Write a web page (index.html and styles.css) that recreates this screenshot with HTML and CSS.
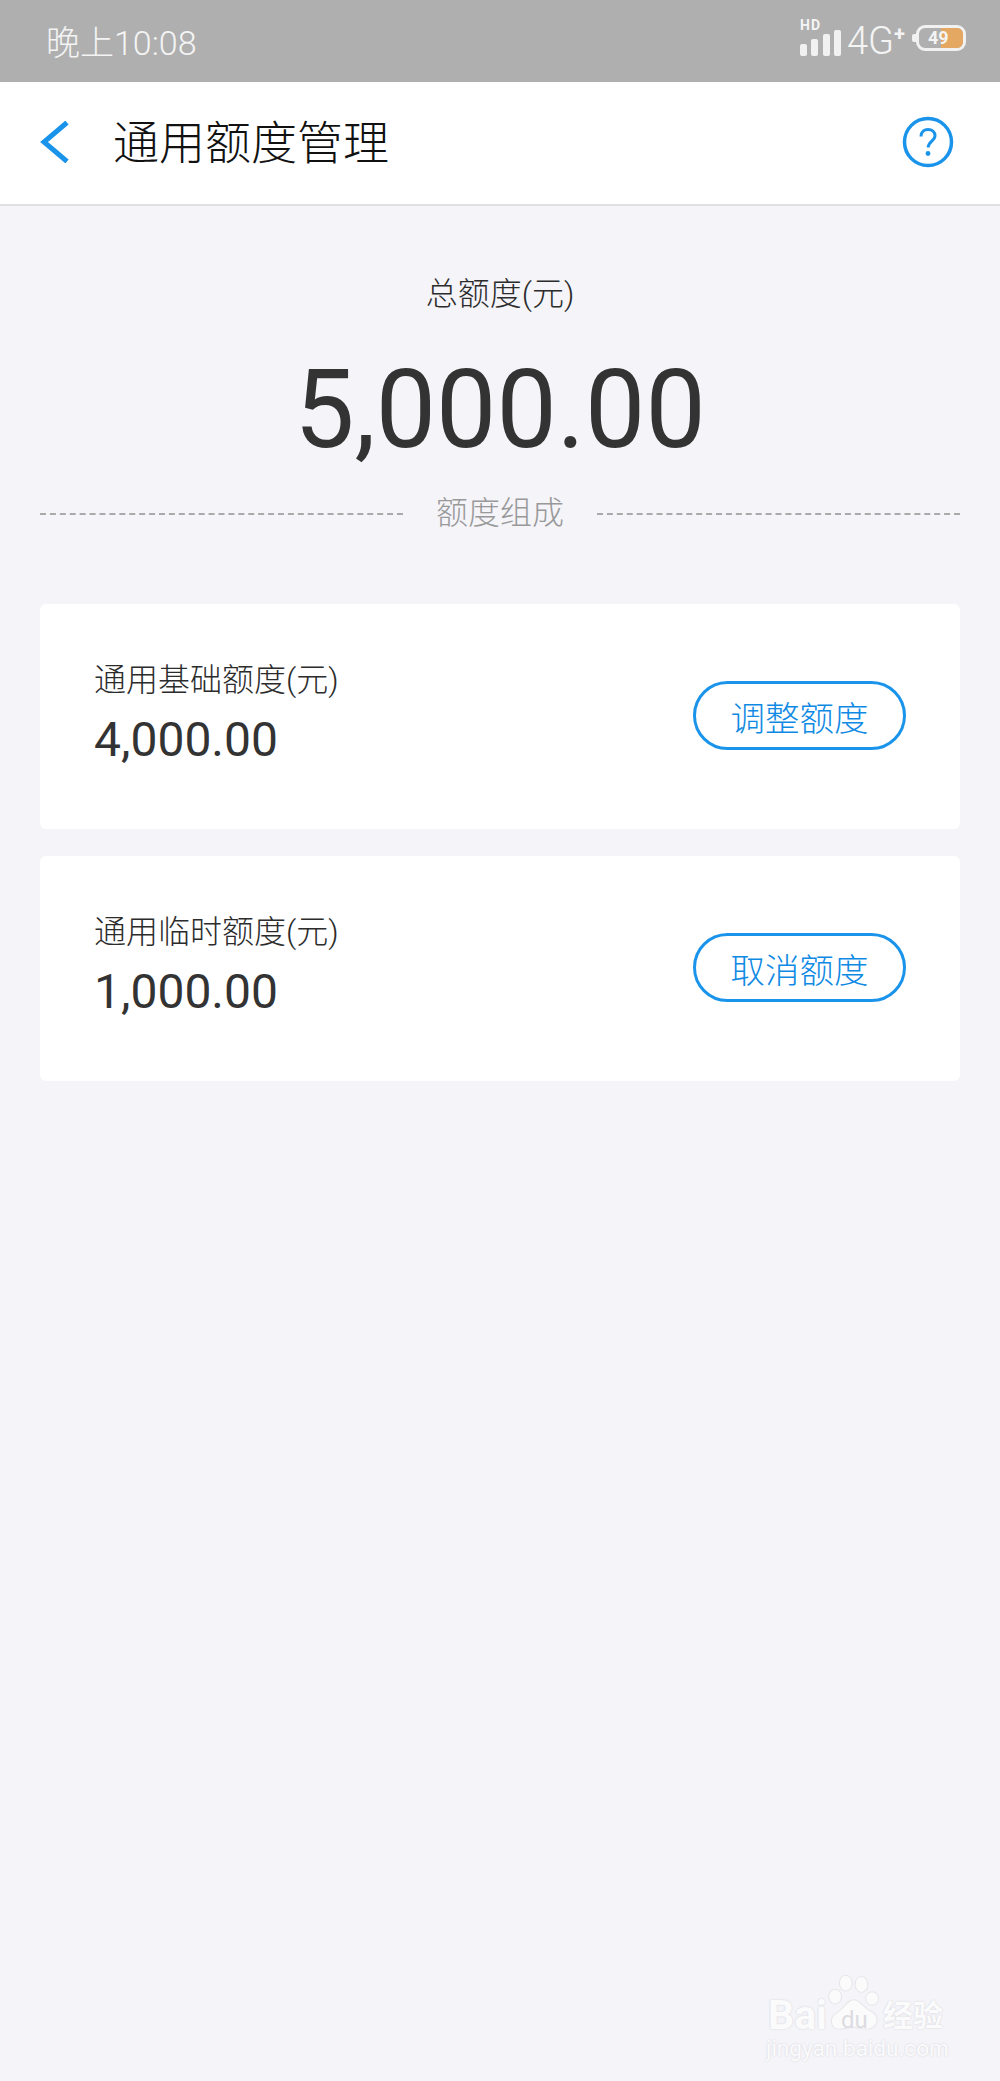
FILE: index.html
```html
<!DOCTYPE html>
<html lang="zh-CN">
<head>
    <meta charset="UTF-8">
    <meta name="viewport" content="width=device-width, initial-scale=1.0">
    <title>通用额度管理</title>
    <link rel="stylesheet" href="styles.css">
</head>
<body>
    <div class="status-bar">
        <span class="time">晚上10:08</span>
        <div class="status-icons">
            <div class="signal">
                <span class="hd">HD</span>
                <svg width="42" height="26" viewBox="0 0 42 26">
                    <rect x="0" y="14" width="7" height="12" rx="2" fill="#f1f1f1"/>
                    <rect x="11" y="9" width="7" height="17" rx="2" fill="#f1f1f1"/>
                    <rect x="23" y="4" width="7" height="22" rx="2" fill="#f1f1f1"/>
                    <rect x="34" y="0" width="7" height="26" rx="2" fill="#f1f1f1"/>
                </svg>
            </div>
            <span class="network">4G</span>
            <span class="plus">+</span>
            <div class="battery-cap"></div>
            <div class="battery">
                <span class="battery-level"></span>
                <span class="battery-num">49</span>
            </div>
        </div>
    </div>

    <div class="header">
        <svg class="back" width="30" height="42" viewBox="0 0 30 42">
            <path d="M27 1.500 L4 21 L27 40.500" fill="none" stroke="#1a94ea" stroke-width="5"/>
        </svg>
        <h1>通用额度管理</h1>
        <svg class="help" width="52" height="52" viewBox="0 0 52 52">
            <circle cx="26" cy="26" r="23.500" fill="none" stroke="#1a94ea" stroke-width="3.500"/>
            <path d="M19 20.500 C19 15.500 22.500 13.500 26 13.500 C30 13.500 33 16 33 19.800 C33 25 26.200 25.500 26.200 31.500" fill="none" stroke="#1a94ea" stroke-width="3"/>
            <circle cx="26" cy="37.500" r="2.400" fill="#1a94ea"/>
        </svg>
    </div>

    <div class="summary">
        <p class="summary-label">总额度(元)</p>
        <p class="summary-amount">5,000.00</p>
        <div class="divider">
            <span class="dash"></span>
            <span class="divider-text">额度组成</span>
            <span class="dash"></span>
        </div>
    </div>

    <div class="cards">
        <div class="card">
            <div class="card-text">
                <p class="card-label">通用基础额度(元)</p>
                <p class="card-amount">4,000.00</p>
            </div>
            <button type="button" class="pill">调整额度</button>
        </div>
        <div class="card">
            <div class="card-text">
                <p class="card-label">通用临时额度(元)</p>
                <p class="card-amount">1,000.00</p>
            </div>
            <button type="button" class="pill">取消额度</button>
        </div>
    </div>

    <div class="watermark">
        <div class="wm-top">
            <span class="wm-bai">Bai</span>
            <svg class="wm-paw" width="54" height="60" viewBox="0 0 76 98" preserveAspectRatio="none">
                <ellipse cx="10" cy="37" rx="9" ry="12" fill="#fbfbfc" stroke="#e6e6eb" stroke-width="1.500"/>
                <ellipse cx="25" cy="15" rx="9" ry="13" fill="#fbfbfc" stroke="#e6e6eb" stroke-width="1.500"/>
                <ellipse cx="47" cy="17" rx="9" ry="13" fill="#fbfbfc" stroke="#e6e6eb" stroke-width="1.500"/>
                <ellipse cx="62" cy="40" rx="9" ry="11" fill="#fbfbfc" stroke="#e6e6eb" stroke-width="1.500"/>
                <path d="M36 42 C46 42 50 56 62 62 C74 70 70 90 54 90 C46 90 42 87 36 87 C30 87 26 90 16 90 C4 90 0 72 12 64 C24 56 26 42 36 42 Z" fill="#fbfbfc" stroke="#e6e6eb" stroke-width="1.500"/>
            </svg>
            <span class="wm-du">du</span>
            <span class="wm-jy">经验</span>
        </div>
        <div class="wm-url">jingyan.baidu.com</div>
    </div>
</body>
</html>
```

FILE: styles.css
```css
* {
    margin: 0;
    padding: 0;
    box-sizing: border-box;
}

body {
    position: relative;
    height: 2081px;
    overflow: hidden;
    background-color: #f4f4f9;
    font-family: Roboto, "Noto Sans CJK SC", sans-serif;
}

.status-bar {
    display: flex;
    justify-content: space-between;
    align-items: center;
    height: 82px;
    padding: 0 34px 2px 46px;
    background-color: #afafaf;
    color: #f4f4f4;
}

.time {
    font-size: 34px;
    font-weight: 300;
}

.status-icons {
    display: flex;
    align-items: center;
    height: 82px;
}

.signal {
    position: relative;
    width: 42px;
    height: 30px;
    margin-top: 3px;
    margin-right: 5px;
    padding-top: 3px;
}

.hd {
    position: absolute;
    left: 0;
    top: -9px;
    font-size: 14px;
    font-weight: 700;
    letter-spacing: 1px;
    line-height: 14px;
}

.network {
    font-size: 38px;
    font-weight: 300;
    line-height: 40px;
    margin-top: 2px;
}

.plus {
    font-size: 20px;
    font-weight: 700;
    line-height: 20px;
    margin-top: -12px;
    margin-right: 7px;
}

.battery-cap {
    width: 4px;
    height: 8px;
    margin-top: -4px;
    background-color: #f1f1f1;
    border-radius: 2px 0 0 2px;
}

.battery {
    position: relative;
    width: 50px;
    height: 26px;
    margin-top: -4px;
    border: 3px solid #f1f1f1;
    border-radius: 9px;
    overflow: hidden;
}

.battery-level {
    position: absolute;
    right: 0;
    top: 0;
    bottom: 0;
    width: 22px;
    background-color: #e5a862;
}

.battery-num {
    position: absolute;
    left: 9px;
    top: 0;
    font-size: 18px;
    font-weight: 700;
    line-height: 20px;
}

.header {
    display: flex;
    align-items: center;
    height: 124px;
    padding: 0 46px 2px 40px;
    background-color: #ffffff;
    border-bottom: 2px solid #dfdfe4;
}

.header h1 {
    flex: 1;
    margin-left: 43px;
    padding-bottom: 6px;
    font-size: 46px;
    font-weight: 300;
    color: #111111;
}

.summary {
    padding: 66px 40px 0;
    text-align: center;
}

.summary-label {
    font-size: 32px;
    font-weight: 300;
    line-height: 44px;
    color: #2c2c2c;
}

.summary-amount {
    margin-top: 24px;
    font-size: 110px;
    line-height: 140px;
    color: #333333;
    transform: scaleX(0.976);
}

.divider {
    display: flex;
    align-items: center;
    height: 50px;
    margin-top: 9px;
}

.dash {
    flex: 1;
    border-top: 2px dashed #aaaaaa;
}

.divider-text {
    width: 194px;
    padding-bottom: 8px;
    font-size: 32px;
    font-weight: 300;
    color: #999999;
}

.cards {
    display: flex;
    flex-direction: column;
    gap: 27px;
    padding: 65px 40px 0;
}

.card {
    display: flex;
    justify-content: space-between;
    align-items: center;
    height: 225px;
    padding: 0 54px;
    background-color: #ffffff;
    border-radius: 6px;
}

.card-text {
    padding-bottom: 6px;
}

.card-label {
    font-size: 32px;
    font-weight: 300;
    line-height: 46px;
    color: #2c2c2c;
}

.card-amount {
    margin-top: 6px;
    font-size: 48px;
    line-height: 62px;
    color: #333333;
}

.pill {
    width: 213px;
    height: 69px;
    margin-bottom: 2px;
    background-color: #ffffff;
    border: 3px solid #1a94ea;
    border-radius: 35px;
    font-family: inherit;
    font-size: 34.500px;
    font-weight: 300;
    color: #0f8ae4;
}

.watermark {
    position: absolute;
    left: 766px;
    top: 1974px;
    width: 190px;
    color: #fbfbfc;
    text-shadow: 0 0 2px #cfcfd6;
}

.wm-top {
    position: relative;
    height: 59px;
}

.wm-bai {
    position: absolute;
    left: 2px;
    top: 16px;
    font-size: 41px;
    font-weight: 700;
    line-height: 50px;
}

.wm-paw {
    position: absolute;
    left: 62px;
    top: 0;
}

.wm-du {
    position: absolute;
    left: 75px;
    top: 32px;
    font-size: 24px;
    line-height: 28px;
    color: #dcdce2;
    text-shadow: none;
}

.wm-jy {
    position: absolute;
    left: 117px;
    top: 22px;
    font-size: 30px;
    font-weight: 700;
    line-height: 40px;
    white-space: nowrap;
}

.wm-url {
    font-size: 22.500px;
    line-height: 30px;
    white-space: nowrap;
}
```
